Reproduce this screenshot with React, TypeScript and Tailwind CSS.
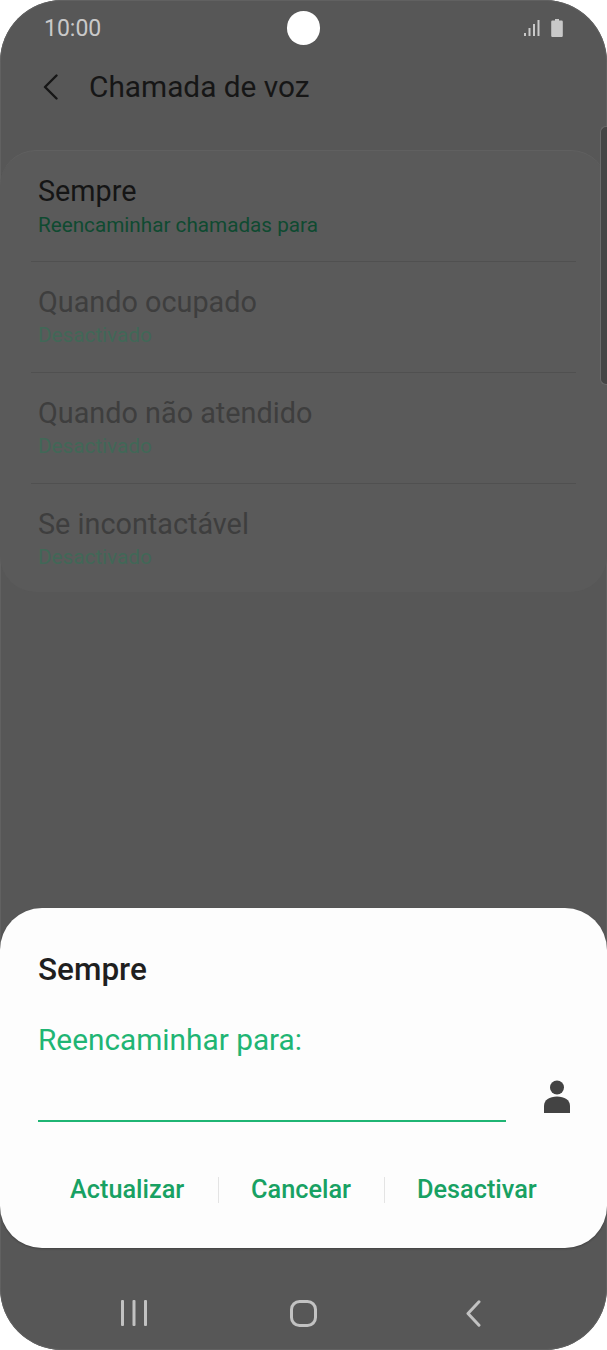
const rows = [
  { title: "Sempre", sub: "Reencaminhar chamadas para", on: true },
  { title: "Quando ocupado", sub: "Desactivado", on: false },
  { title: "Quando não atendido", sub: "Desactivado", on: false },
  { title: "Se incontactável", sub: "Desactivado", on: false },
];

const App = () => {
  return (
    <div className="w-[607px] h-[1350px] bg-white overflow-hidden font-['Roboto',sans-serif]">
      <div className="relative flex flex-col w-full h-full bg-[#575757] rounded-[62px] overflow-hidden shadow-[inset_0_0_0_1px_#616161]">
        {/* camera hole */}
        <div className="absolute left-[287px] top-[11px] w-[33px] h-[34px] rounded-full bg-white" />
        {/* scrollbar */}
        <div className="absolute right-0 top-[126px] w-[7px] h-[259px] rounded-l-[6px] bg-[#454545] border-l border-y border-[#6a6a6a]" />

        <div className="flex items-center justify-between h-[56px] pl-[44px] pr-[44px] text-[#c9c9c9]">
          <span className="text-[23px] leading-none">10:00</span>
          <div className="flex items-center gap-[11px]">
            <svg width="16" height="18" viewBox="0 0 16 18" fill="#c9c9c9">
              <rect x="0" y="14" width="2" height="3" />
              <rect x="4.500" y="9" width="2" height="8" />
              <rect x="9" y="5" width="2" height="12" />
              <rect x="13.500" y="1" width="2" height="16" />
            </svg>
            <svg width="12" height="18" viewBox="0 0 12 18" fill="#c9c9c9">
              <path d="M4 0h4v1.500h2.600a1.200 1.200 0 0 1 1.200 1.200V16.800a1.200 1.200 0 0 1-1.200 1.200H1.400a1.200 1.200 0 0 1-1.200-1.200V2.700a1.200 1.200 0 0 1 1.200-1.200H4z" />
            </svg>
          </div>
        </div>

        <div className="flex items-center h-[62px] pl-[43px] text-[#161616]">
          <svg width="15" height="26" viewBox="0 0 15 26" fill="none" stroke="#161616" strokeWidth="2.400" strokeLinecap="round" strokeLinejoin="round">
            <path d="M13.500 1.500 2 13l11.500 11.500" />
          </svg>
          <span className="ml-[31px] text-[29.800px] leading-none">Chamada de voz</span>
        </div>

        <div className="mt-[32px] h-[442px] rounded-[36px] bg-[#5a5a5a] border-t border-[#606060] flex flex-col">
          {rows.map((r, i) => (
            <div key={r.title} className="h-[111px] px-[31px] shrink-0">
              <div className={`h-full flex flex-col pl-[7px] pt-[24px] ${i < 3 ? "border-b border-[#505050]" : ""}`}>
                <span className={`text-[28.800px] leading-[32px] ${r.on ? "text-[#151515]" : "text-[#3e3e3e]"}`}>{r.title}</span>
                <span className={`text-[20.700px] leading-[24px] ${r.on ? "mt-[6px] text-[#0f4a31]" : "mt-[5px] text-[#416857]"}`}>{r.sub}</span>
              </div>
            </div>
          ))}
        </div>

        <div className="mt-[316px] h-[340px] rounded-[42px] bg-[#fdfdfd] shadow-[0_1px_2px_rgba(0,0,0,0.25)] pt-[43px] pl-[38px] pr-[37px] flex flex-col shrink-0">
          <span className="text-[31.500px] leading-[38px] font-medium text-[#1f1f1f]">Sempre</span>
          <span className="mt-[33px] text-[29.800px] leading-[36px] text-[#1fb574]">Reencaminhar para:</span>
          <div className="flex items-end justify-between mt-[22px]">
            <div className="w-[468px] h-[36px] border-b-2 border-[#1fb574]" />
            <svg className="mb-[9px]" width="26" height="33" viewBox="0 0 26 33" fill="#434343">
              <circle cx="13" cy="7.500" r="7" />
              <path d="M0 33v-7c0-6 5.500-9.500 13-9.500S26 20 26 26v7z" />
            </svg>
          </div>
          <div className="flex items-center mt-[55px] -ml-[38px] -mr-[37px] pl-[70px] text-[25.300px] leading-none font-medium text-[#18a163]">
            <span className="w-[148px]">Actualizar</span>
            <span className="w-px h-[26px] bg-[#e4e4e4]" />
            <span className="ml-[32px] w-[133px]">Cancelar</span>
            <span className="w-px h-[26px] bg-[#e4e4e4]" />
            <span className="ml-[32px]">Desactivar</span>
          </div>
        </div>

        <div className="flex-1 flex items-center pl-[121px] pt-[28px]">
          <svg width="26" height="26" viewBox="0 0 26 26" fill="#c2c2c2">
            <rect x="0" y="0" width="3" height="26" rx="1" />
            <rect x="11.500" y="0" width="3" height="26" rx="1" />
            <rect x="23" y="0" width="3" height="26" rx="1" />
          </svg>
          <svg className="ml-[143px]" width="27" height="27" viewBox="0 0 27 27" fill="none" stroke="#c2c2c2" strokeWidth="3">
            <rect x="1.500" y="1.500" width="24" height="24" rx="8" />
          </svg>
          <svg className="ml-[149px]" width="15" height="27" viewBox="0 0 15 27" fill="none" stroke="#c2c2c2" strokeWidth="3" strokeLinecap="round" strokeLinejoin="round">
            <path d="M13 1.800 2 13.500 13 25.200" />
          </svg>
        </div>
      </div>
    </div>
  );
};

export default App;
